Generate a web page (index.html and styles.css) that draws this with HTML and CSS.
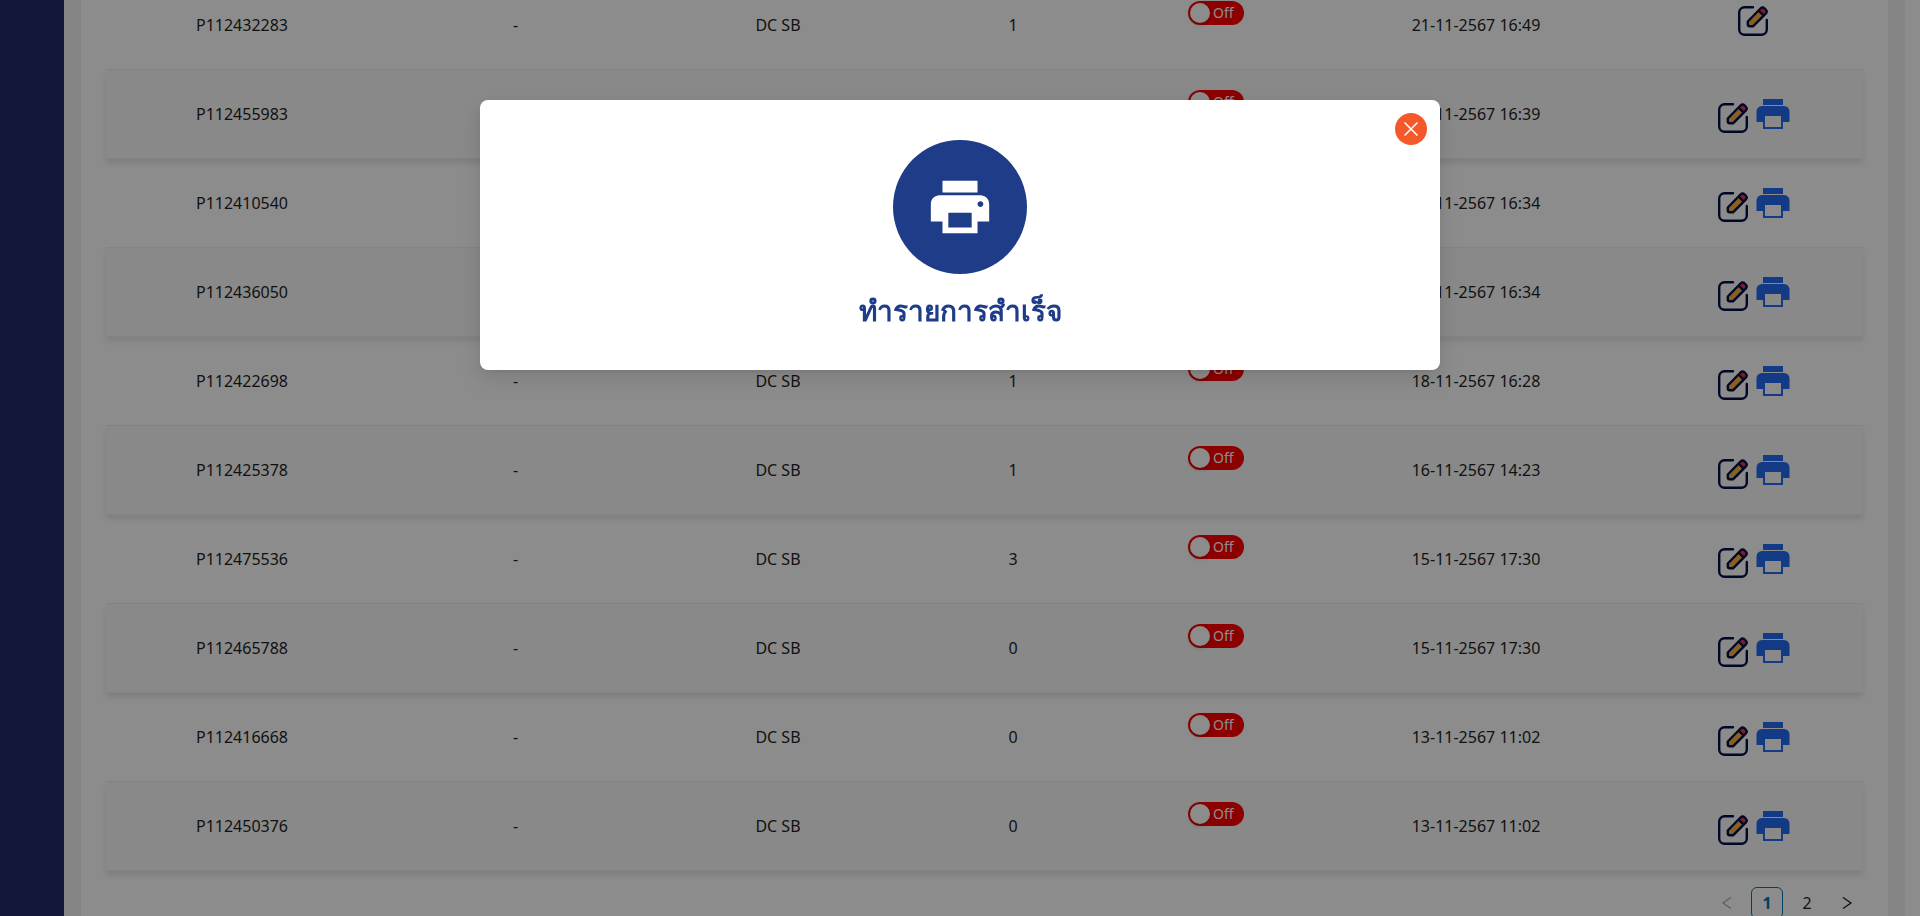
FILE: index.html
```html
<!DOCTYPE html>
<html lang="th">
<head>
<meta charset="utf-8">
<meta name="viewport" content="width=device-width, initial-scale=1">
<title>รายการ</title>
<link rel="stylesheet" href="styles.css">
</head>
<body>
<svg class="sprite" aria-hidden="true">
  <symbol id="i-edit" viewBox="0 0 30 30">
    <path d="M15 1.200H6.500A5.300 5.300 0 0 0 1.200 6.500v17a5.300 5.300 0 0 0 5.300 5.300h17a5.300 5.300 0 0 0 5.300-5.300V14" fill="none" stroke="#001048" stroke-width="2.400" stroke-linecap="round"/>
    <path d="M9.800 15.500 20.500 4.500l5.200 5.200L15 20.300h-3.200a2 2 0 0 1-2-2z" fill="#f8b040"/>
    <path d="m20.500 4.500 2-2a3 3 0 0 1 4.200 0l1 1a3 3 0 0 1 0 4.200l-2 2z" fill="#f0304c"/>
    <path d="M9.800 15.500 22.500 2.500a3 3 0 0 1 4.200 0l1 1a3 3 0 0 1 0 4.200L15 20.300h-3.200a2 2 0 0 1-2-2zM20.500 4.500l5.200 5.200" fill="none" stroke="#001048" stroke-width="2.400" stroke-linejoin="round"/>
  </symbol>
  <symbol id="i-print" viewBox="0 0 40 40">
    <path d="M10 5h20v6H10zM9 12h22a5.500 5.500 0 0 1 5.500 5.500V28H30v7H10v-7H3.500V17.500A5.500 5.500 0 0 1 9 12zm3 10v11h16V22z" fill="#236bf0" fill-rule="evenodd"/>
  </symbol>
</svg>
<div class="app">
  <aside class="sidebar"></aside>
  <main class="content">
    <section class="card">
      <table class="orders">
        <colgroup><col class="c-code"><col class="c-ref"><col class="c-site"><col class="c-count"><col class="c-state"><col class="c-date"><col class="c-act"></colgroup>
        <tbody>
          <tr><td>P112432283</td><td>-</td><td>DC SB</td><td>1</td><td><label class="switch"><input type="checkbox" role="switch"><span>Off</span></label></td><td>21-11-2567 16:49</td><td><div class="actions single"><button class="edit" aria-label="Edit"><svg><use href="#i-edit"/></svg></button></div></td></tr>
          <tr><td>P112455983</td><td>-</td><td>DC SB</td><td>1</td><td><label class="switch"><input type="checkbox" role="switch"><span>Off</span></label></td><td>18-11-2567 16:39</td><td><div class="actions"><button class="edit" aria-label="Edit"><svg><use href="#i-edit"/></svg></button><button class="print" aria-label="Print"><svg><use href="#i-print"/></svg></button></div></td></tr>
          <tr><td>P112410540</td><td>-</td><td>DC SB</td><td>1</td><td><label class="switch"><input type="checkbox" role="switch"><span>Off</span></label></td><td>18-11-2567 16:34</td><td><div class="actions"><button class="edit" aria-label="Edit"><svg><use href="#i-edit"/></svg></button><button class="print" aria-label="Print"><svg><use href="#i-print"/></svg></button></div></td></tr>
          <tr><td>P112436050</td><td>-</td><td>DC SB</td><td></td><td><label class="switch"><input type="checkbox" role="switch"><span>Off</span></label></td><td>18-11-2567 16:34</td><td><div class="actions"><button class="edit" aria-label="Edit"><svg><use href="#i-edit"/></svg></button><button class="print" aria-label="Print"><svg><use href="#i-print"/></svg></button></div></td></tr>
          <tr><td>P112422698</td><td>-</td><td>DC SB</td><td>1</td><td><label class="switch"><input type="checkbox" role="switch"><span>Off</span></label></td><td>18-11-2567 16:28</td><td><div class="actions"><button class="edit" aria-label="Edit"><svg><use href="#i-edit"/></svg></button><button class="print" aria-label="Print"><svg><use href="#i-print"/></svg></button></div></td></tr>
          <tr><td>P112425378</td><td>-</td><td>DC SB</td><td>1</td><td><label class="switch"><input type="checkbox" role="switch"><span>Off</span></label></td><td>16-11-2567 14:23</td><td><div class="actions"><button class="edit" aria-label="Edit"><svg><use href="#i-edit"/></svg></button><button class="print" aria-label="Print"><svg><use href="#i-print"/></svg></button></div></td></tr>
          <tr><td>P112475536</td><td>-</td><td>DC SB</td><td>3</td><td><label class="switch"><input type="checkbox" role="switch"><span>Off</span></label></td><td>15-11-2567 17:30</td><td><div class="actions"><button class="edit" aria-label="Edit"><svg><use href="#i-edit"/></svg></button><button class="print" aria-label="Print"><svg><use href="#i-print"/></svg></button></div></td></tr>
          <tr><td>P112465788</td><td>-</td><td>DC SB</td><td>0</td><td><label class="switch"><input type="checkbox" role="switch"><span>Off</span></label></td><td>15-11-2567 17:30</td><td><div class="actions"><button class="edit" aria-label="Edit"><svg><use href="#i-edit"/></svg></button><button class="print" aria-label="Print"><svg><use href="#i-print"/></svg></button></div></td></tr>
          <tr><td>P112416668</td><td>-</td><td>DC SB</td><td>0</td><td><label class="switch"><input type="checkbox" role="switch"><span>Off</span></label></td><td>13-11-2567 11:02</td><td><div class="actions"><button class="edit" aria-label="Edit"><svg><use href="#i-edit"/></svg></button><button class="print" aria-label="Print"><svg><use href="#i-print"/></svg></button></div></td></tr>
          <tr><td>P112450376</td><td>-</td><td>DC SB</td><td>0</td><td><label class="switch"><input type="checkbox" role="switch"><span>Off</span></label></td><td>13-11-2567 11:02</td><td><div class="actions"><button class="edit" aria-label="Edit"><svg><use href="#i-edit"/></svg></button><button class="print" aria-label="Print"><svg><use href="#i-print"/></svg></button></div></td></tr>
        </tbody>
      </table>
      <nav class="pager" aria-label="Pagination">
        <button disabled aria-label="Previous"><svg viewBox="0 0 12 12"><path d="M10 .5 2 6l8 5.500"/></svg></button>
        <button class="current" aria-current="page">1</button>
        <button>2</button>
        <button aria-label="Next"><svg viewBox="0 0 12 12"><path d="m2 .5 8 5.500-8 5.500"/></svg></button>
      </nav>
    </section>
  </main>
</div>
<div class="mask">
  <div class="modal" role="dialog" aria-modal="true" aria-labelledby="done">
    <button class="close" aria-label="Close"><svg viewBox="0 0 14 14"><path d="m.5.5 13 13M13.500.5l-13 13"/></svg></button>
    <div class="badge"><svg viewBox="0 0 24 24"><path d="M19 8H5c-1.660 0-3 1.340-3 3v6h4v4h12v-4h4v-6c0-1.660-1.340-3-3-3zm-3 11H8v-5h8v5zm3-7c-.55 0-1-.45-1-1s.45-1 1-1 1 .45 1 1-.45 1-1 1zm-1-9H6v4h12V3z"/></svg></div>
    <h2 id="done">ทำรายการสำเร็จ</h2>
  </div>
</div>
</body>
</html>
```
FILE: styles.css
```css
* { box-sizing: border-box; }
body {
  margin: 0;
  background: #fff;
  color: #1f1f1f;
  font: 16px/24px "Noto Sans", "Open Sans", sans-serif;
}
button {
  margin: 0;
  padding: 0;
  border: 0;
  background: none;
  font: inherit;
  color: inherit;
  cursor: pointer;
}
svg { display: block; }
.sprite { position: absolute; width: 0; height: 0; }

.app {
  display: flex;
  height: 100vh;
  padding-right: 15px;
  overflow: hidden;
}
.sidebar { flex: 0 0 64px; background: #1f2a68; }
.content {
  flex: 1;
  min-width: 0;
  padding: 0 16px;
  background: #f3f3f3;
}
.card {
  min-height: 100%;
  padding: 0 25px 24px;
  background: #fff;
  border: solid #f0f0f0;
  border-width: 0 1px;
}

.orders {
  width: 100%;
  margin-top: -19px;
  border-collapse: separate;
  border-spacing: 0;
  table-layout: fixed;
  text-align: center;
}
.c-code { width: 272px; }
.c-ref { width: 275px; }
.c-site { width: 250px; }
.c-count, .c-act { width: 220px; }
.c-state { width: 186px; }
.c-date { width: 334px; }
.orders td {
  height: 89px;
  padding: 0;
  border-bottom: 1px solid #f0f0f0;
}
.orders tr:nth-child(even) {
  background: #f9f9f9;
  box-shadow: 0 4px 6px rgba(0, 0, 0, .1);
}

.switch {
  display: flex;
  width: 56px;
  height: 24px;
  margin: 0 auto 24px;
  padding: 2px;
  gap: 3px;
  border-radius: 12px;
  background: #ff0000;
  color: #fff;
  font-size: 14px;
  line-height: 19px;
}
.switch input {
  appearance: none;
  width: 20px;
  height: 20px;
  margin: 0;
  border-radius: 50%;
  background: #fff;
  box-shadow: 0 2px 4px rgba(0, 35, 11, .2);
}

.actions {
  display: flex;
  justify-content: center;
  align-items: center;
}
.actions button {
  display: grid;
  place-items: center;
  width: 40px;
  height: 40px;
}
.edit { margin-top: 8px; }
.actions .edit { margin-top: 8px; }
.single .edit { margin: 0 0 8px; }
.edit svg { width: 30px; height: 30px; }
.print svg { width: 40px; height: 40px; }

.pager {
  display: flex;
  justify-content: flex-end;
  gap: 8px;
  margin-top: 16px;
}
.pager button {
  display: grid;
  place-items: center;
  width: 32px;
  height: 32px;
  border-radius: 6px;
}
.pager .current {
  border: 1px solid #0078b4;
  color: #0074b4;
  font-weight: 700;
}
.pager svg {
  width: 12px;
  height: 12px;
  fill: none;
  stroke: currentColor;
  stroke-width: 1.300;
}
.pager button:disabled { color: #b0b0b0; }

.mask {
  position: fixed;
  inset: 0;
  padding-top: 100px;
  background: rgba(0, 0, 0, .45);
}
.modal {
  position: relative;
  display: flex;
  flex-direction: column;
  align-items: center;
  width: 50%;
  margin: 0 auto;
  padding: 40px 24px;
  border-radius: 8px;
  background: #fff;
  box-shadow: 0 6px 16px rgba(0, 0, 0, .08), 0 3px 6px -4px rgba(0, 0, 0, .12), 0 9px 28px 8px rgba(0, 0, 0, .05);
}
.close {
  position: absolute;
  top: 13px;
  right: 13px;
  display: grid;
  place-items: center;
  width: 32px;
  height: 32px;
  border-radius: 50%;
  background: #f5592b;
}
.close svg {
  width: 14px;
  height: 14px;
  fill: none;
  stroke: #fff;
  stroke-width: 1.500;
}
.badge {
  display: grid;
  place-items: center;
  width: 134px;
  height: 134px;
  border-radius: 50%;
  background: #1e3c87;
}
.badge svg { width: 70px; height: 70px; fill: #fff; }
.modal h2 {
  margin: 16px 0 0;
  color: #1e3c87;
  font-size: 28px;
  line-height: 40px;
  font-weight: 700;
}
```
